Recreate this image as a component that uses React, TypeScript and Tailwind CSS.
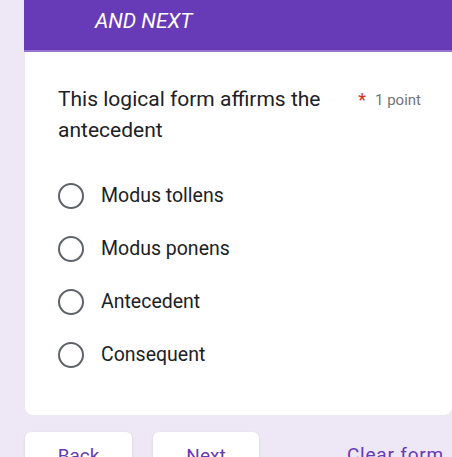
import React from "react";

const options = ["Modus tollens", "Modus ponens", "Antecedent", "Consequent"];

function Radio() {
  return <span className="block w-[26px] h-[26px] rounded-full border-2 border-[#5f6368] shrink-0" />;
}

export default function App() {
  return (
    <div
      className="w-[452px] h-[457px] overflow-hidden bg-[#ede7f6] pl-[25px]"
      style={{ fontFamily: "Roboto, 'Liberation Sans', sans-serif" }}
    >
      <div className="h-[52px] bg-[#673ab7] border-b-2 border-[#9575cd] pl-[71px] pt-[8px] -ml-px">
        <span className="text-[21px] italic text-white leading-[26px]">AND NEXT</span>
      </div>
      <div className="bg-white rounded-bl-[8px] rounded-br-[8px] h-[363px] pl-[33px] pr-[31px] pt-[32px]">
        <div className="flex items-start justify-between">
          <p className="text-[21px] text-[#202124] leading-[31px] w-[290px]">
            This logical form affirms the antecedent
          </p>
          <div className="flex items-center gap-[9px] pt-[2px] text-[15px] leading-[28px]">
            <span className="text-[#d93025] text-[18px]">*</span>
            <span className="text-[#70757a]">1 point</span>
          </div>
        </div>
        <div className="flex flex-col gap-[27px] mt-[37px]">
          {options.map((o) => (
            <label key={o} className="flex items-center gap-[17px] h-[26px]">
              <Radio />
              <span className="text-[19.5px] text-[#202124]">{o}</span>
            </label>
          ))}
        </div>
      </div>
      <div className="flex items-start mt-[17px] pr-[8px]">
        <button className="w-[107px] h-[40px] bg-white rounded-[6px] shadow-sm text-[#673ab7] text-[19px] pt-[9px]">
          Back
        </button>
        <button className="ml-[21px] w-[106px] h-[40px] bg-white rounded-[6px] shadow-sm text-[#673ab7] text-[19px] pt-[9px]">
          Next
        </button>
        <span className="ml-auto text-[#673ab7] text-[19px] tracking-[0.8px] pt-[9px]">Clear form</span>
      </div>
    </div>
  );
}
